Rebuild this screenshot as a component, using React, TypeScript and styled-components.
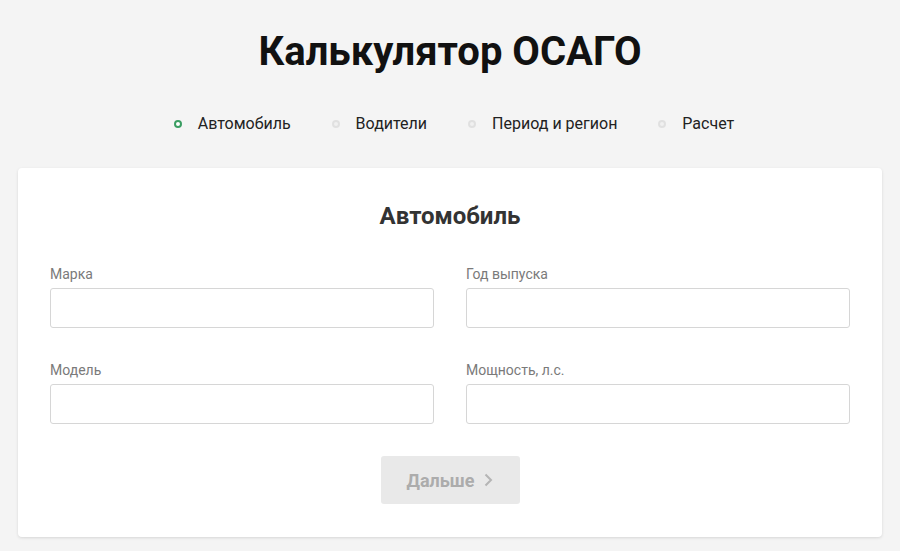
import React from 'react';
import styled, { createGlobalStyle } from 'styled-components';

const GlobalStyle = createGlobalStyle`
  body {
    margin: 0;
    background: #f4f4f4;
    font-family: Roboto, "Liberation Sans", sans-serif;
  }
`;

const steps = ['Автомобиль', 'Водители', 'Период и регион', 'Расчет'];

const fields = [
  { label: 'Марка' },
  { label: 'Год выпуска' },
  { label: 'Модель' },
  { label: 'Мощность, л.с.' },
];

const App: React.FC = () => {
  return (
    <Page>
      <GlobalStyle />
      <Title>Калькулятор ОСАГО</Title>
      <Steps>
        {steps.map((s, i) => (
          <Step key={s}>
            <Dot $active={i === 0} />
            {s}
          </Step>
        ))}
      </Steps>
      <Card>
        <CardTitle>Автомобиль</CardTitle>
        <Grid>
          {fields.map(f => (
            <Field key={f.label}>
              <Label>{f.label}</Label>
              <Input />
            </Field>
          ))}
        </Grid>
        <Actions>
          <NextButton disabled>
            Дальше
            <svg width="10" height="14" viewBox="0 0 10 14" fill="none">
              <path d="M2.5 1.5L8 7L2.5 12.5" stroke="#b5b5b5" strokeWidth="2" />
            </svg>
          </NextButton>
        </Actions>
      </Card>
    </Page>
  );
};

export default App;

const Page = styled.div`
  width: 900px;
  height: 551px;
  padding-top: 28px;
  box-sizing: border-box;
  overflow: hidden;
`;

const Title = styled.h1`
  margin: 0;
  text-align: center;
  font-size: 40px;
  line-height: 48px;
  font-weight: 700;
  color: #111;
`;

const Steps = styled.div`
  display: flex;
  justify-content: center;
  gap: 41px;
  margin-top: 37px;
  padding-left: 8px;
`;

const Step = styled.div`
  display: flex;
  align-items: center;
  gap: 16px;
  font-size: 16px;
  line-height: 22px;
  color: #222;
`;

const Dot = styled.span<{ $active?: boolean }>`
  width: 4px;
  height: 4px;
  border-radius: 50%;
  border: 2px solid ${p => (p.$active ? '#3a9d62' : '#e0e0e0')};
  background: ${p => (p.$active ? '#fff' : '#f0f0f0')};
`;

const Card = styled.div`
  margin: 33px 18px 0;
  background: #fff;
  border-radius: 4px;
  box-shadow: 0 1px 3px rgba(0, 0, 0, 0.12);
  padding: 34px 32px 33px;
`;

const CardTitle = styled.h2`
  margin: 0;
  text-align: center;
  font-size: 24px;
  line-height: 28px;
  font-weight: 700;
  color: #333;
`;

const Grid = styled.div`
  display: grid;
  grid-template-columns: 1fr 1fr;
  column-gap: 32px;
  row-gap: 33px;
  margin-top: 35px;
`;

const Field = styled.div`
  display: flex;
  flex-direction: column;
  gap: 5px;
`;

const Label = styled.label`
  font-size: 14px;
  line-height: 18px;
  color: #7a7a7a;
`;

const Input = styled.input`
  height: 40px;
  box-sizing: border-box;
  border: 1px solid #d6d6d6;
  border-radius: 3px;
  background: #fff;
  outline: none;
`;

const Actions = styled.div`
  display: flex;
  justify-content: center;
  margin-top: 32px;
`;

const NextButton = styled.button`
  width: 139px;
  height: 48px;
  display: flex;
  align-items: center;
  justify-content: center;
  gap: 9px;
  border: none;
  border-radius: 3px;
  background: #e9e9e9;
  color: #acacac;
  font-family: Roboto, "Liberation Sans", sans-serif;
  font-size: 18px;
  font-weight: 700;
`;
